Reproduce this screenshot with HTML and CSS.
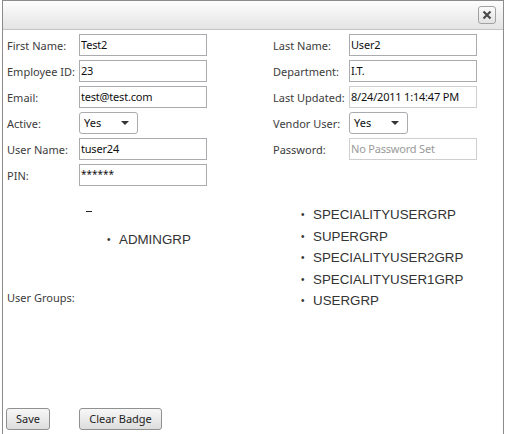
FILE: index.html
```html
<!DOCTYPE html>
<html lang="en">
<head>
    <meta charset="UTF-8">
    <meta name="viewport" content="width=device-width, initial-scale=1.0">
    <title>Edit User</title>
    <link rel="stylesheet" href="styles.css">
</head>
<body>
    <div class="dialog">
        <div class="titlebar">
            <button class="close-btn" title="Close">
                <svg width="10" height="10" viewBox="0 0 10 10">
                    <path d="M1.5 1.5 L8.5 8.5 M8.5 1.5 L1.5 8.5" stroke="#4a4a4a" stroke-width="2.2"/>
                </svg>
            </button>
        </div>

        <div class="user-form">
            <label>First Name:</label>
            <div class="cell"><input type="text" value="Test2"></div>
            <label>Last Name:</label>
            <div class="cell"><input type="text" value="User2"></div>

            <label>Employee ID:</label>
            <div class="cell"><input type="text" value="23"></div>
            <label>Department:</label>
            <div class="cell"><input type="text" value="I.T."></div>

            <label>Email:</label>
            <div class="cell"><input type="text" value="test@test.com"></div>
            <label>Last Updated:</label>
            <div class="cell"><input type="text" class="readonly" value="8/24/2011 1:14:47 PM" readonly></div>

            <label>Active:</label>
            <div class="cell"><div class="dropdown">Yes<span class="arrow"></span></div></div>
            <label>Vendor User:</label>
            <div class="cell"><div class="dropdown">Yes<span class="arrow"></span></div></div>

            <label>User Name:</label>
            <div class="cell"><input type="text" value="tuser24"></div>
            <label>Password:</label>
            <div class="cell"><input type="text" class="readonly" placeholder="No Password Set"></div>

            <label>PIN:</label>
            <div class="cell"><input type="text" class="pin" value="******"></div>
        </div>

        <div class="groups">
            <label class="groups-label">User Groups:</label>
            <div class="available">
                <div class="dash"></div>
                <ul>
                    <li>ADMINGRP</li>
                </ul>
            </div>
            <div class="assigned">
                <ul>
                    <li>SPECIALITYUSERGRP</li>
                    <li>SUPERGRP</li>
                    <li>SPECIALITYUSER2GRP</li>
                    <li>SPECIALITYUSER1GRP</li>
                    <li>USERGRP</li>
                </ul>
            </div>
        </div>

        <div class="footer">
            <div><button class="btn save-btn">Save</button></div>
            <div><button class="btn badge-btn">Clear Badge</button></div>
        </div>
    </div>
</body>
</html>
```

FILE: styles.css
```css
* {
    margin: 0;
    padding: 0;
    box-sizing: border-box;
}

body {
    background-color: #fff;
    font-family: "Noto Sans", "Open Sans", sans-serif;
    font-size: 11px;
    color: #3c3c3c;
    overflow: hidden;
}

.dialog {
    margin-left: 2px;
    width: 502px;
    height: 450px;
    border: 1px solid #8c8c8c;
    background-color: #fff;
}

.titlebar {
    height: 29px;
    border-bottom: 1px solid #c4c4c4;
    background: linear-gradient(#fdfdfd, #e4e4e4);
    display: flex;
    justify-content: flex-end;
    align-items: flex-start;
    padding: 5px 7px 0 0;
}

.close-btn {
    width: 18px;
    height: 18px;
    border: 1px solid #a2a2a2;
    border-radius: 3px;
    background: linear-gradient(#fbfbfb, #e3e3e3);
    display: flex;
    align-items: center;
    justify-content: center;
}

.user-form {
    display: grid;
    grid-template-columns: 72px 194px 76px 128px;
    grid-auto-rows: 22px;
    row-gap: 4px;
    padding: 4px 0 0 4px;
}

.user-form label {
    display: flex;
    align-items: center;
    white-space: nowrap;
}

input {
    width: 128px;
    height: 22px;
    border: 1px solid #a9abae;
    padding: 0 1px 1px;
    font-family: "Noto Sans", "Open Sans", sans-serif;
    font-size: 11px;
    letter-spacing: -0.2px;
    color: #111;
    outline: none;
}

input.readonly {
    border-color: #cfcfcf;
}

input::placeholder {
    color: #9a9a9a;
}

input.pin {
    font-size: 10px;
    letter-spacing: 0;
    padding-bottom: 3px;
}

.dropdown {
    position: relative;
    width: 59px;
    height: 22px;
    border: 1px solid #a9abae;
    border-radius: 3px;
    padding: 1px 0 0 4px;
    font-size: 11px;
    color: #111;
    line-height: 18px;
}

.arrow {
    position: absolute;
    right: 8px;
    top: 8px;
    border-left: 4px solid transparent;
    border-right: 4px solid transparent;
    border-top: 4px solid #333;
}

.groups {
    display: grid;
    grid-template-columns: 72px 194px auto;
    height: 222px;
    padding-left: 4px;
    font-family: "Liberation Sans", Arial, sans-serif;
    font-size: 13.33px;
    color: #333;
}

.groups-label {
    align-self: center;
    font-family: "Noto Sans", "Open Sans", sans-serif;
    font-size: 11px;
    color: #3c3c3c;
}

.groups ul {
    list-style: none;
    padding-left: 40px;
    line-height: 21.5px;
}

/* small centred bullet in front of each group name */
.groups li::before {
    content: "•";
    display: inline-block;
    width: 12px;
    margin-left: -12px;
    font-size: 10px;
    vertical-align: 1px;
}

.available {
    padding-top: 25px;
}

.dash {
    width: 6px;
    height: 1px;
    margin-left: 7px;
    background-color: #222;
}

.available ul {
    margin-top: 17px;
}

.assigned ul {
    margin-top: 18px;
}

.footer {
    display: grid;
    grid-template-columns: 73px auto;
    padding-left: 3px;
}

.btn {
    height: 22px;
    padding-bottom: 1px;
    border: 1px solid #8f9191;
    border-radius: 3px;
    background: linear-gradient(#f7f7f7, #dddddd);
    font-family: "Noto Sans", "Open Sans", sans-serif;
    font-size: 11px;
    color: #1e1e1e;
}

.save-btn {
    width: 44px;
}

.badge-btn {
    width: 83px;
}
```
